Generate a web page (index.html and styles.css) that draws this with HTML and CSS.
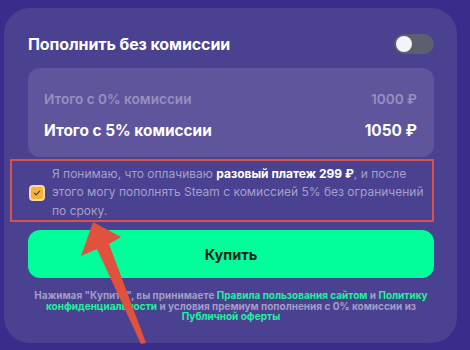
FILE: index.html
```html
<!DOCTYPE html>
<html lang="ru">
<head>
    <meta charset="UTF-8">
    <meta name="viewport" content="width=device-width, initial-scale=1.0">
    <title>Пополнить без комиссии</title>
    <link rel="stylesheet" href="styles.css">
</head>
<body>
    <div class="card">
        <div class="card-header">
            <h2 class="card-title">Пополнить без комиссии</h2>
            <span class="toggle"><span class="toggle-knob"></span></span>
        </div>

        <div class="totals">
            <div class="totals-row muted">
                <span>Итого с 0% комиссии</span>
                <span>1000 ₽</span>
            </div>
            <div class="totals-row">
                <span>Итого с 5% комиссии</span>
                <span>1050 ₽</span>
            </div>
        </div>

        <label class="consent">
            <span class="checkbox">
                <svg viewBox="0 0 10 10" width="8" height="8"><path d="M1.8 5.2 L4 7.3 L8.3 2.6" fill="none" stroke="#5a3a1a" stroke-width="1.4" stroke-linecap="round" stroke-linejoin="round"/></svg>
            </span>
            <span class="consent-text">Я понимаю, что оплачиваю <b>разовый платеж 299 ₽</b>, и после этого могу пополнять Steam с комиссией 5% без ограничений по сроку.</span>
        </label>

        <button class="buy-button">Купить</button>

        <p class="terms">
            Нажимая "Купить", вы принимаете <a href="#">Правила пользования сайтом</a> и <a href="#">Политику конфиденциальности</a> и условия премиум пополнения с 0% комиссии из <a href="#">Публичной оферты</a>
        </p>
    </div>

    <!-- стрелка-указатель -->
    <svg class="arrow" width="470" height="350" viewBox="0 0 470 350">
        <polygon points="93,222 121,237 109,244 146,343 141,344 97,249 81,256" fill="#e0513e"/>
    </svg>
</body>
</html>
```

FILE: styles.css
```css
* {
    box-sizing: border-box;
    margin: 0;
    padding: 0;
}

html, body {
    height: 100%;
    overflow: hidden;
}

body {
    background: #3a2c8a;
    font-family: Inter, 'Noto Sans', sans-serif;
    padding: 8px 13px 0 4px;
    position: relative;
}

/* карточка */
.card {
    background: #4a4191;
    border-radius: 26px;
    padding: 26px 23px 0 24px;
    height: 335px;
}

.card-header {
    display: flex;
    justify-content: space-between;
    align-items: center;
    height: 20px;
}

.card-title {
    font-size: 16px;
    font-weight: 700;
    color: #fff;
    letter-spacing: -0.1px;
}

.toggle {
    width: 40px;
    height: 20px;
    border-radius: 10px;
    background: #5c5f6d;
    display: flex;
    align-items: center;
    padding: 2px;
}

.toggle-knob {
    width: 16px;
    height: 16px;
    border-radius: 50%;
    background: #f2f3fb;
}

/* итоги */
.totals {
    margin-top: 14px;
    background: #5e559d;
    border-radius: 12px;
    padding: 21px 17px 16px 16px;
    display: flex;
    flex-direction: column;
    gap: 12px;
}

.totals-row {
    display: flex;
    justify-content: space-between;
    line-height: 20px;
    font-size: 15.4px;
    font-weight: 700;
    color: #fff;
}

.totals-row.muted {
    font-size: 13.6px;
    font-weight: 600;
    color: #9790bf;
}

/* согласие */
.consent {
    display: flex;
    align-items: center;
    gap: 7px;
    margin: 2px 0 0 -18px;
    border: 2px solid #d6524b;
    padding: 4px 6px 0 17px;
    height: 63px;
}

.checkbox {
    flex: none;
    width: 16px;
    height: 16px;
    border-radius: 4px;
    border: 2px solid #f7d9a4;
    background: #f5b43a;
    display: flex;
    align-items: center;
    justify-content: center;
}

.consent-text {
    font-size: 12px;
    line-height: 18.5px;
    color: #a5a0cb;
}

.consent-text b {
    color: #fff;
    font-weight: 700;
}

/* кнопка */
.buy-button {
    display: block;
    width: 100%;
    height: 48px;
    margin-top: 8px;
    border: none;
    border-radius: 12px;
    background: #00fe9a;
    color: #10251e;
    font-family: inherit;
    font-size: 14.5px;
    font-weight: 700;
    cursor: pointer;
}

.terms {
    margin-top: 12px;
    text-align: center;
    font-size: 10px;
    line-height: 10.5px;
    font-weight: 700;
    color: #a29dc6;
    padding: 0;
}

.terms a {
    color: #1cf39c;
    text-decoration: none;
}

.arrow {
    position: absolute;
    left: 0;
    top: 0;
    pointer-events: none;
}
```
